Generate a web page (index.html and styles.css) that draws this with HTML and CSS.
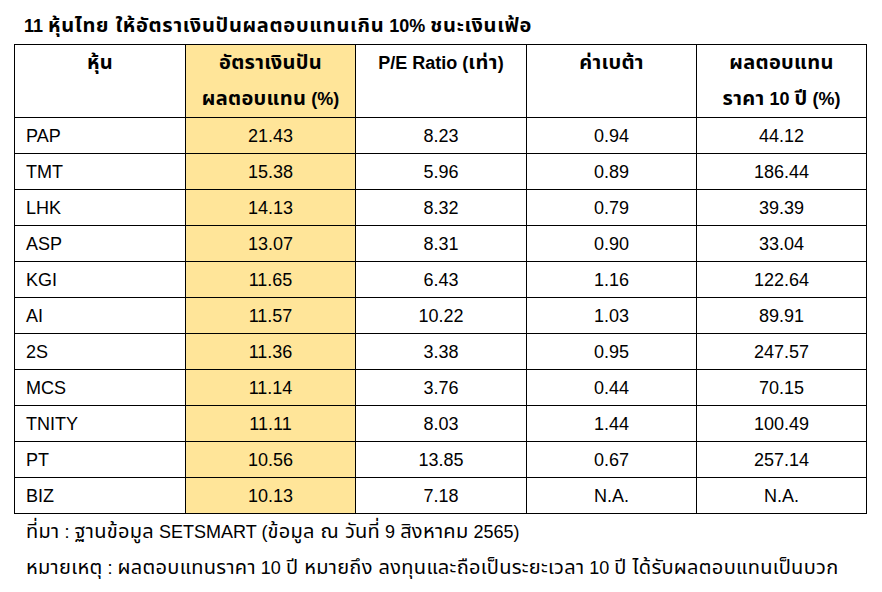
FILE: index.html
```html
<!DOCTYPE html>
<html lang="th">
<head>
<meta charset="utf-8">
<title>11 หุ้นไทย</title>
<link rel="stylesheet" href="styles.css">
</head>
<body>
<div class="page">
  <h1 class="title">11 <span class="th">หุ้นไทย ให้อัตราเงินปันผลตอบแทนเกิน</span> 10% <span class="th">ชนะเงินเฟ้อ</span></h1>
  <table class="tbl">
    <colgroup>
      <col class="c1"><col class="c2"><col class="c3"><col class="c4"><col class="c5">
    </colgroup>
    <thead>
      <tr>
        <th><span class="th">หุ้น</span></th>
        <th class="hl"><span class="th">อัตราเงินปัน</span><br><span class="th">ผลตอบแทน</span> (%)</th>
        <th>P/E Ratio (<span class="th">เท่า</span>)</th>
        <th><span class="th">ค่าเบต้า</span></th>
        <th><span class="th">ผลตอบแทน</span><br><span class="th">ราคา</span> 10 <span class="th">ปี</span> (%)</th>
      </tr>
    </thead>
    <tbody>
      <tr><td class="name">PAP</td><td class="hl">21.43</td><td>8.23</td><td>0.94</td><td>44.12</td></tr>
      <tr><td class="name">TMT</td><td class="hl">15.38</td><td>5.96</td><td>0.89</td><td>186.44</td></tr>
      <tr><td class="name">LHK</td><td class="hl">14.13</td><td>8.32</td><td>0.79</td><td>39.39</td></tr>
      <tr><td class="name">ASP</td><td class="hl">13.07</td><td>8.31</td><td>0.90</td><td>33.04</td></tr>
      <tr><td class="name">KGI</td><td class="hl">11.65</td><td>6.43</td><td>1.16</td><td>122.64</td></tr>
      <tr><td class="name">AI</td><td class="hl">11.57</td><td>10.22</td><td>1.03</td><td>89.91</td></tr>
      <tr><td class="name">2S</td><td class="hl">11.36</td><td>3.38</td><td>0.95</td><td>247.57</td></tr>
      <tr><td class="name">MCS</td><td class="hl">11.14</td><td>3.76</td><td>0.44</td><td>70.15</td></tr>
      <tr><td class="name">TNITY</td><td class="hl">11.11</td><td>8.03</td><td>1.44</td><td>100.49</td></tr>
      <tr><td class="name">PT</td><td class="hl">10.56</td><td>13.85</td><td>0.67</td><td>257.14</td></tr>
      <tr><td class="name">BIZ</td><td class="hl">10.13</td><td>7.18</td><td>N.A.</td><td>N.A.</td></tr>
    </tbody>
  </table>
  <div class="notes">
    <p><span class="th">ที่มา</span> : <span class="th">ฐานข้อมูล</span> SETSMART (<span class="th">ข้อมูล ณ วันที่</span> 9 <span class="th">สิงหาคม</span> 2565)</p>
    <p><span class="th">หมายเหตุ</span> : <span class="th">ผลตอบแทนราคา</span> 10 <span class="th">ปี หมายถึง ลงทุนและถือเป็นระยะเวลา</span> 10 <span class="th">ปี ได้รับผลตอบแทนเป็นบวก</span></p>
  </div>
</div>
</body>
</html>
```

FILE: styles.css
```css
html, body {
  margin: 0;
  padding: 0;
  background: #ffffff;
}

body {
  font-family: "Liberation Sans", Arial, "Noto Sans Thai", "DejaVu Sans", sans-serif;
  color: #000000;
  font-size: 18px;
}

.page {
  width: 882px;
  height: 592px;
  overflow: hidden;
}

.th {
  font-size: 20px;
  line-height: 1;
  letter-spacing: 0.3px;
}

.title {
  margin: 0;
  height: 44px;
  box-sizing: border-box;
  padding: 14px 0 0 24px;
  font-size: 18px;
  line-height: 24px;
  font-weight: bold;
  white-space: nowrap;
}

.title .th {
  letter-spacing: 0.7px;
}

.tbl {
  margin-left: 14px;
  border-collapse: collapse;
  table-layout: fixed;
  width: 852px;
}

.c1 { width: 171px; }
.c2 { width: 170px; }
.c3 { width: 171px; }
.c4 { width: 170px; }
.c5 { width: 170px; }

.tbl th,
.tbl td {
  border: 1px solid #000000;
  padding: 0;
  text-align: center;
}

.tbl th {
  font-weight: bold;
  line-height: 36px;
  height: 72px;
  vertical-align: top;
  padding: 0 4px;
  white-space: nowrap;
}

.tbl td {
  padding-top: 2px;
  line-height: 33px;
  height: 33px;
  vertical-align: middle;
}

.tbl td.name {
  text-align: left;
  padding-left: 11px;
}

.hl {
  background: #ffe599;
}

.notes {
  padding-left: 26px;
}

.notes p {
  margin: 0;
  line-height: 36px;
  height: 36px;
  white-space: nowrap;
}
```
